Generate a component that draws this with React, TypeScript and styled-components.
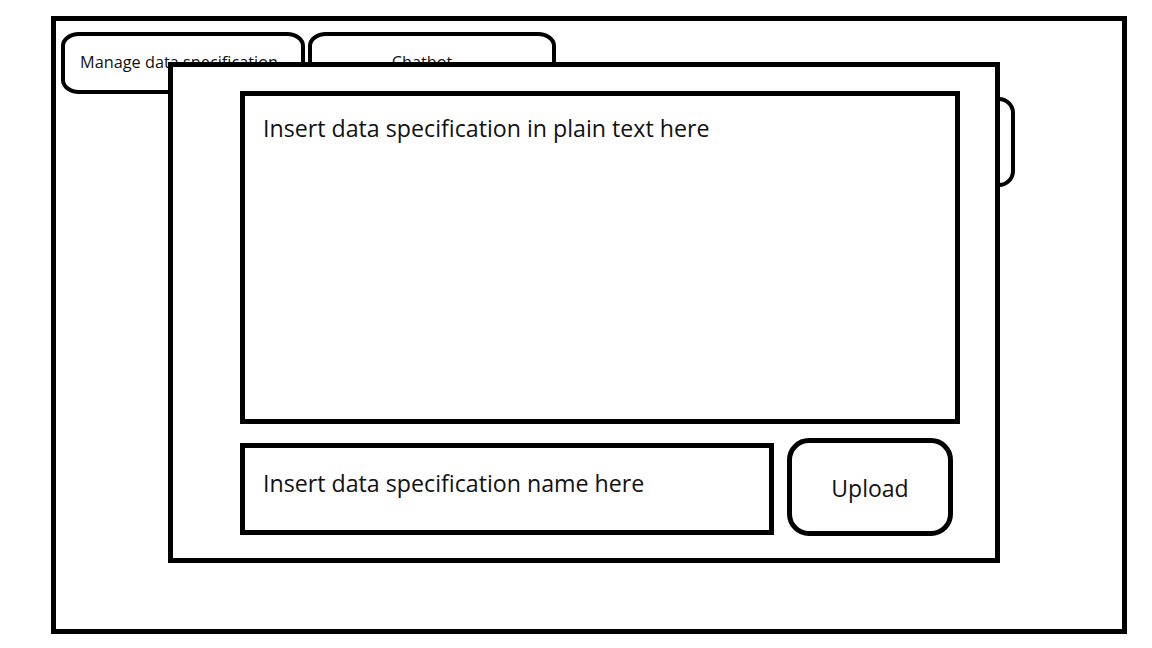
import styled, { createGlobalStyle } from "styled-components"

const GlobalStyle = createGlobalStyle`
  html, body {
    margin: 0;
    padding: 0;
    background: #fff;
  }
  body {
    font-family: "Open Sans", "Liberation Sans", sans-serif;
    color: #111;
  }
`

const Page = styled.div`
  width: 1152px;
  height: 648px;
  padding: 16px 0 0 51px;
  box-sizing: border-box;
  position: relative;
`

const Frame = styled.div`
  width: 1076px;
  height: 618px;
  border: 5px solid #000;
  box-sizing: border-box;
  padding: 11px 0 0 5px;
  display: flex;
  flex-direction: column;
`

const TabRow = styled.div`
  display: flex;
  gap: 3px;
`

const Tab = styled.div<{ $width: number; $nudge: number }>`
  width: ${p => p.$width}px;
  height: 62px;
  border: 4px solid #000;
  border-radius: 18px / 14px;
  box-sizing: border-box;
  display: flex;
  align-items: center;
  justify-content: center;
  font-size: 16.3px;
  padding: 0 ${p => p.$nudge}px 3px 0;
`

const SideRow = styled.div`
  display: flex;
  justify-content: flex-end;
  padding-right: 107px;
  margin-top: 3px;
`

const SideButton = styled.div`
  width: 170px;
  height: 90px;
  border: 4px solid #000;
  border-radius: 16px;
  box-sizing: border-box;
`

// the dialog sits over the page
const Dialog = styled.div`
  position: absolute;
  left: 168px;
  top: 62px;
  width: 832px;
  height: 501px;
  border: 5px solid #000;
  box-sizing: border-box;
  background: #fff;
  padding: 24px 0 0 67px;
  display: flex;
  flex-direction: column;
  gap: 14px;
`

const TextBox = styled.div<{ $width: number; $height: number; $pad: number }>`
  width: ${p => p.$width}px;
  height: ${p => p.$height}px;
  border: 5px solid #000;
  box-sizing: border-box;
  padding: ${p => p.$pad}px 0 0 18px;
  font-size: 23.2px;
  line-height: 30px;
`

const BottomRow = styled.div`
  display: flex;
  align-items: flex-end;
  gap: 13px;

  & > ${TextBox} {
    margin-bottom: 1px;
  }
`

const UploadButton = styled.div`
  width: 166px;
  height: 98px;
  border: 5px solid #000;
  border-radius: 22px;
  box-sizing: border-box;
  display: flex;
  align-items: center;
  justify-content: center;
  font-size: 23px;
  padding-top: 2px;
`

export default function App() {
  return (
    <Page>
      <GlobalStyle />
      <Frame>
        <TabRow>
          <Tab $width={244} $nudge={8}>Manage data specification</Tab>
          <Tab $width={248} $nudge={20}>Chatbot</Tab>
        </TabRow>
        <SideRow>
          <SideButton />
        </SideRow>
      </Frame>
      <Dialog>
        <TextBox $width={720} $height={333} $pad={17}>
          Insert data specification in plain text here
        </TextBox>
        <BottomRow>
          <TextBox $width={534} $height={92} $pad={20}>
            Insert data specification name here
          </TextBox>
          <UploadButton>Upload</UploadButton>
        </BottomRow>
      </Dialog>
    </Page>
  )
}
